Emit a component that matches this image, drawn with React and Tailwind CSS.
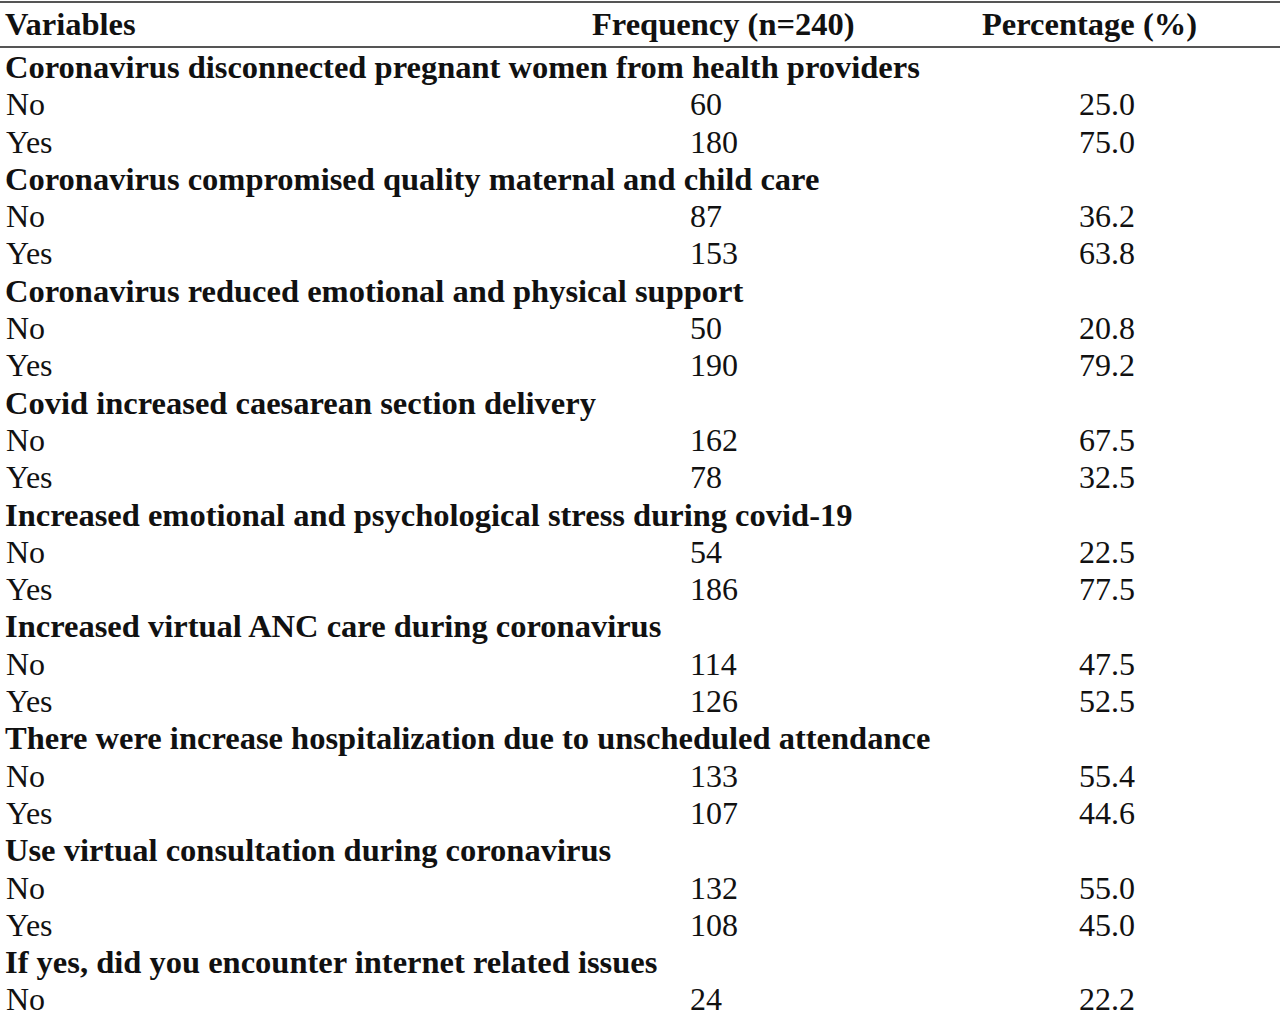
const sections = [
  { title: "Coronavirus disconnected pregnant women from health providers", rows: [["No", "60", "25.0"], ["Yes", "180", "75.0"]] },
  { title: "Coronavirus compromised quality maternal and child care", rows: [["No", "87", "36.2"], ["Yes", "153", "63.8"]] },
  { title: "Coronavirus reduced emotional and physical support", rows: [["No", "50", "20.8"], ["Yes", "190", "79.2"]] },
  { title: "Covid increased caesarean section delivery", rows: [["No", "162", "67.5"], ["Yes", "78", "32.5"]] },
  { title: "Increased emotional and psychological stress during covid-19", rows: [["No", "54", "22.5"], ["Yes", "186", "77.5"]] },
  { title: "Increased virtual ANC care during coronavirus", rows: [["No", "114", "47.5"], ["Yes", "126", "52.5"]] },
  { title: "There were increase hospitalization due to unscheduled attendance", rows: [["No", "133", "55.4"], ["Yes", "107", "44.6"]] },
  { title: "Use virtual consultation during coronavirus", rows: [["No", "132", "55.0"], ["Yes", "108", "45.0"]] },
  { title: "If yes, did you encounter internet related issues", rows: [["No", "24", "22.2"]] },
];

export default function App() {
  return (
    <div className="w-[1280px] h-[1013px] overflow-hidden bg-white text-[#111] text-[32px] leading-[37.3px] [font-family:'Liberation_Serif','Times_New_Roman',serif]">
      <div className="mt-[1px] border-t-2 border-b-2 border-[#555] flex h-[47px] items-center font-bold text-[32.5px]">
        <div className="w-[592px] pl-[5px]">Variables</div>
        <div className="w-[390px]">Frequency (n=240)</div>
        <div>Percentage (%)</div>
      </div>
      <div className="pt-[1px]">
        {sections.map((s) => (
          <div key={s.title}>
            <div className="pl-[5px] h-[37.3px] font-bold text-[32.5px] whitespace-nowrap">{s.title}</div>
            {s.rows.map((r) => (
              <div key={r[0]} className="flex h-[37.3px]">
                <div className="w-[690px] pl-[6px]">{r[0]}</div>
                <div className="w-[389px]">{r[1]}</div>
                <div>{r[2]}</div>
              </div>
            ))}
          </div>
        ))}
      </div>
    </div>
  );
}
